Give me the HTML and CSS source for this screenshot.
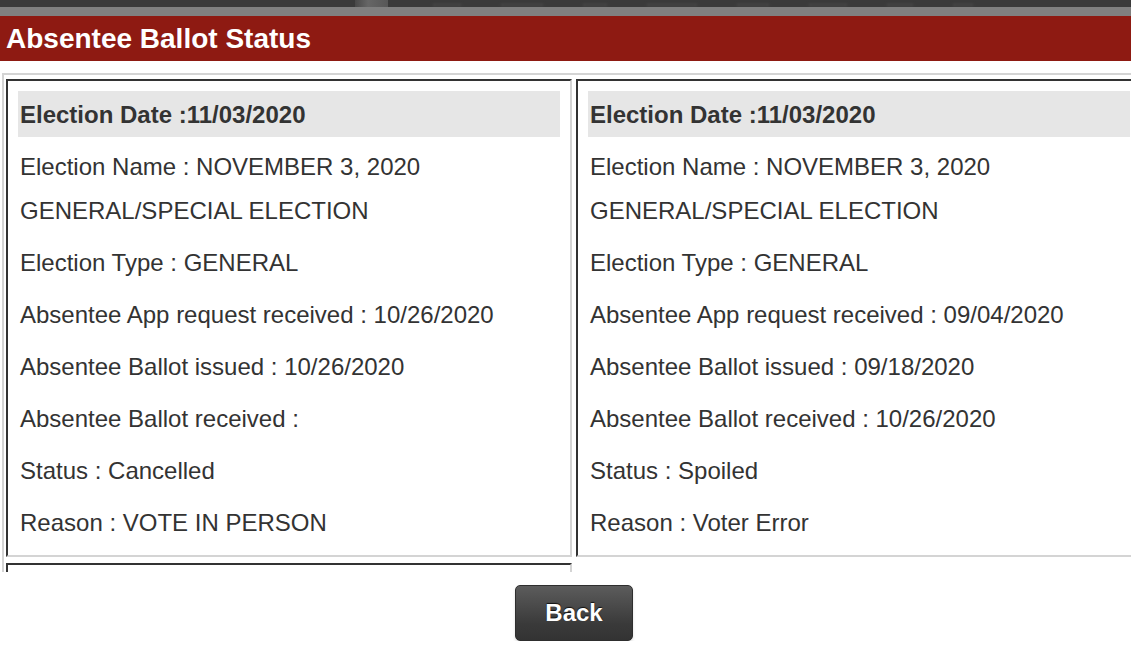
FILE: index.html
```html
<!DOCTYPE html>
<html lang="en">
<head>
<meta charset="utf-8">
<title>Absentee Ballot Status</title>
<link rel="stylesheet" href="styles.css">
</head>
<body>
<div class="page">
  <div class="topbar">
    <span class="tab"></span>
    <span class="blobs">
      <i class="blob b1"></i><i class="blob b2"></i><i class="blob b3"></i><i class="blob b4"></i><i class="blob b5"></i><i class="blob b6"></i><i class="blob b7"></i><i class="blob b8"></i>
    </span>
  </div>
  <div class="greyband"></div>
  <h1 class="title">Absentee Ballot Status</h1>
  <div class="results">
    <div class="grid">
      <div class="card">
        <div class="card-head">Election Date :11/03/2020</div>
        <div class="field">Election Name : NOVEMBER 3, 2020 GENERAL/SPECIAL ELECTION</div>
        <div class="field">Election Type : GENERAL</div>
        <div class="field">Absentee App request received : 10/26/2020</div>
        <div class="field">Absentee Ballot issued : 10/26/2020</div>
        <div class="field">Absentee Ballot received : </div>
        <div class="field">Status : Cancelled</div>
        <div class="field">Reason : VOTE IN PERSON</div>
      </div>
      <div class="card">
        <div class="card-head">Election Date :11/03/2020</div>
        <div class="field">Election Name : NOVEMBER 3, 2020 GENERAL/SPECIAL ELECTION</div>
        <div class="field">Election Type : GENERAL</div>
        <div class="field">Absentee App request received : 09/04/2020</div>
        <div class="field">Absentee Ballot issued : 09/18/2020</div>
        <div class="field">Absentee Ballot received : 10/26/2020</div>
        <div class="field">Status : Spoiled</div>
        <div class="field">Reason : Voter Error</div>
      </div>
      <div class="card card-empty"></div>
    </div>
  </div>
  <div class="actions">
    <button class="back" type="button">Back</button>
  </div>
</div>
</body>
</html>
```

FILE: styles.css
```css
html, body {
  margin: 0;
  padding: 0;
  background: #ffffff;
  overflow: hidden;
}

.page {
  width: 1148px;
  font-family: "Liberation Sans", Arial, Helvetica, sans-serif;
  color: #333333;
}

.topbar {
  height: 7px;
  background: #3a3a3a;
  overflow: hidden;
  display: flex;
  align-items: flex-end;
}

.tab {
  margin-left: 355px;
  width: 33px;
  height: 7px;
  background: linear-gradient(to right, #484848, #666666 40%, #575757);
}

.blobs {
  display: flex;
  align-items: flex-end;
  gap: 38px;
  margin-left: 44px;
}

.blob {
  display: block;
  width: 30px;
  height: 4px;
  border-radius: 2px;
  background: #424242;
  filter: blur(1px);
}

.b2 { width: 44px; }
.b3 { width: 26px; }
.b4 { width: 52px; }
.b5 { width: 34px; }
.b6 { width: 40px; }
.b7 { width: 28px; }
.b8 { width: 22px; }

.greyband {
  height: 9px;
  background: #808080;
}

.title {
  margin: 0;
  height: 45px;
  line-height: 46px;
  padding-left: 6px;
  background: #8e1a12;
  color: #ffffff;
  font-size: 28px;
  font-weight: bold;
}

.results {
  margin: 12px 0 0 2px;
  height: 499px;
  box-sizing: border-box;
  border-top: 2px solid #d4d4d4;
  border-left: 2px solid #d4d4d4;
  padding: 4px 0 0 2px;
  overflow: hidden;
}

.grid {
  display: grid;
  grid-template-columns: 566px 566px;
  column-gap: 4px;
  row-gap: 6px;
  align-items: start;
}

.card {
  border-style: solid;
  border-width: 2px;
  border-color: #333333 #d4d4d4 #d4d4d4 #333333;
  padding: 10px;
}

.card-empty {
  height: 60px;
}

.card-head {
  height: 46px;
  line-height: 47px;
  padding-left: 2px;
  background: #e6e6e6;
  font-size: 24px;
  font-weight: bold;
  color: #333333;
}

.field {
  margin-top: 8px;
  padding-left: 2px;
  font-size: 24px;
  line-height: 44px;
  color: #333333;
}

.actions {
  padding-top: 13px;
  text-align: center;
}

.back {
  width: 118px;
  height: 56px;
  border: 1px solid #2e2e2e;
  border-radius: 5px;
  background: linear-gradient(to bottom, #5c5c5c, #3a3a3a 70%, #333333);
  color: #ffffff;
  font-family: "Liberation Sans", Arial, Helvetica, sans-serif;
  font-size: 24px;
  font-weight: bold;
  text-shadow: 0 -1px 1px #111111;
  box-shadow: 0 2px 3px rgba(0, 0, 0, 0.12);
  cursor: pointer;
}
```
